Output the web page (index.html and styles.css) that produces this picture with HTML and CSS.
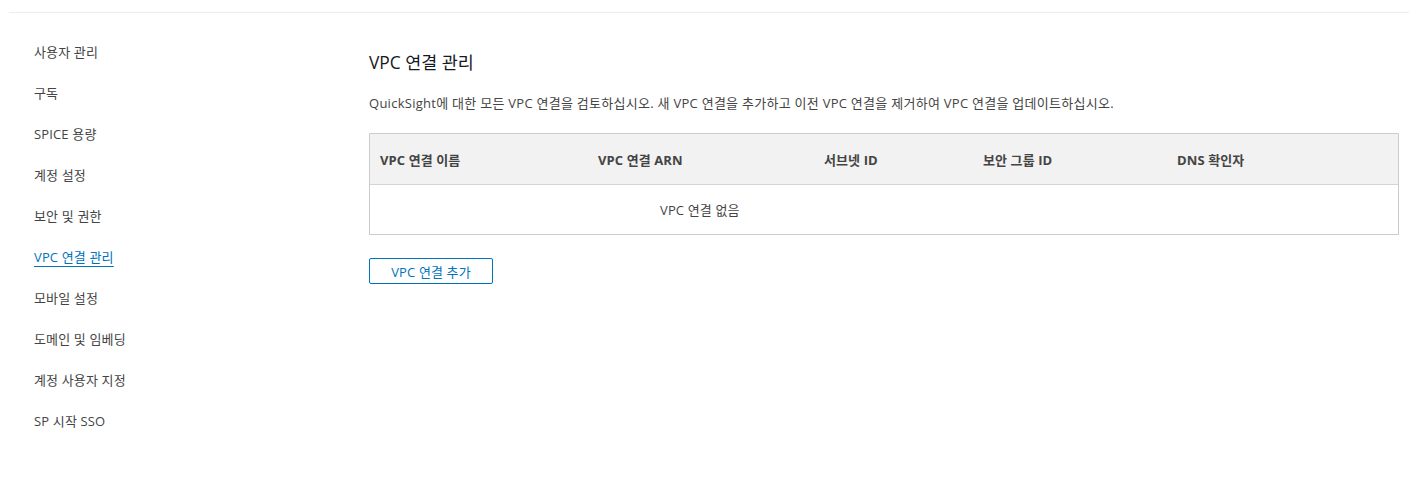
FILE: index.html
```html
<!DOCTYPE html>
<html lang="ko">
<head>
<meta charset="utf-8">
<link rel="stylesheet" href="styles.css">
</head>
<body>
<div class="page">
  <nav class="sidebar">
    <a class="nav-item">사용자 관리</a>
    <a class="nav-item">구독</a>
    <a class="nav-item">SPICE 용량</a>
    <a class="nav-item">계정 설정</a>
    <a class="nav-item">보안 및 권한</a>
    <a class="nav-item active">VPC 연결 관리</a>
    <a class="nav-item">모바일 설정</a>
    <a class="nav-item">도메인 및 임베딩</a>
    <a class="nav-item">계정 사용자 지정</a>
    <a class="nav-item">SP 시작 SSO</a>
  </nav>
  <main class="main">
    <h1 class="title">VPC 연결 관리</h1>
    <p class="desc">QuickSight에 대한 모든 VPC 연결을 검토하십시오. 새 VPC 연결을 추가하고 이전 VPC 연결을 제거하여 VPC 연결을 업데이트하십시오.</p>
    <div class="table">
      <div class="thead">
        <div class="th c1">VPC 연결 이름</div>
        <div class="th c2">VPC 연결 ARN</div>
        <div class="th c3">서브넷 ID</div>
        <div class="th c4">보안 그룹 ID</div>
        <div class="th c5">DNS 확인자</div>
      </div>
      <div class="empty"><span class="empty-text">VPC 연결 없음</span></div>
    </div>
    <button class="btn">VPC 연결 추가</button>
  </main>
</div>
</body>
</html>
```

FILE: styles.css
```css
* { box-sizing: border-box; }
html, body { margin: 0; padding: 0; background: #fff; }
body {
  font-family: "Open Sans", "Noto Sans CJK KR", sans-serif;
  font-size: 13px;
  color: #444;
}
.page {
  margin: 12px 13px 0 9px;
  border-top: 1px solid #eaeded;
  display: flex;
  align-items: flex-start;
}
.sidebar {
  width: 360px;
  padding: 19px 0 0 25px;
  display: flex;
  flex-direction: column;
}
.nav-item {
  height: 41px;
  line-height: 41px;
  color: #444;
  font-size: 13px;
  letter-spacing: 0.15px;
  text-decoration: none;
  cursor: pointer;
  align-self: flex-start;
}
.nav-item.active {
  color: #0073bb;
  text-decoration: underline;
  text-underline-offset: 4px;
}
.main {
  flex: 1;
  padding-top: 37px;
  padding-right: 10px;
}
.title {
  margin: 0;
  font-size: 17.4px;
  line-height: 24px;
  font-weight: 400;
  color: #16191f;
}
.desc {
  margin: 19px 0 20px;
  line-height: 20px;
  font-size: 13px;
  letter-spacing: 0.27px;
  color: #444;
}
.table {
  width: 1030px;
  border: 1px solid #cccccc;
}
.thead {
  display: flex;
  height: 51px;
  background: #f2f2f2;
  border-bottom: 1px solid #d5d5d5;
  align-items: center;
}
.th {
  font-weight: 700;
  color: #444;
  font-size: 13px;
  letter-spacing: 0.1px;
  padding-left: 10px;
}
.c1 { width: 218px; }
.c2 { width: 226px; }
.c3 { width: 159px; }
.c4 { width: 194px; }
.c5 { flex: 1; }
.empty {
  height: 49px;
  display: flex;
  align-items: center;
  padding-left: 290px;
}
.empty-text { color: #444; letter-spacing: 0.15px; }
.btn {
  margin-top: 23px;
  height: 26px;
  width: 124px;
  background: #fff;
  border: 1px solid #0073bb;
  border-radius: 2px;
  color: #0073bb;
  font-family: inherit;
  font-size: 13px;
  letter-spacing: 0.15px;
  padding: 0;
  cursor: pointer;
}
```
